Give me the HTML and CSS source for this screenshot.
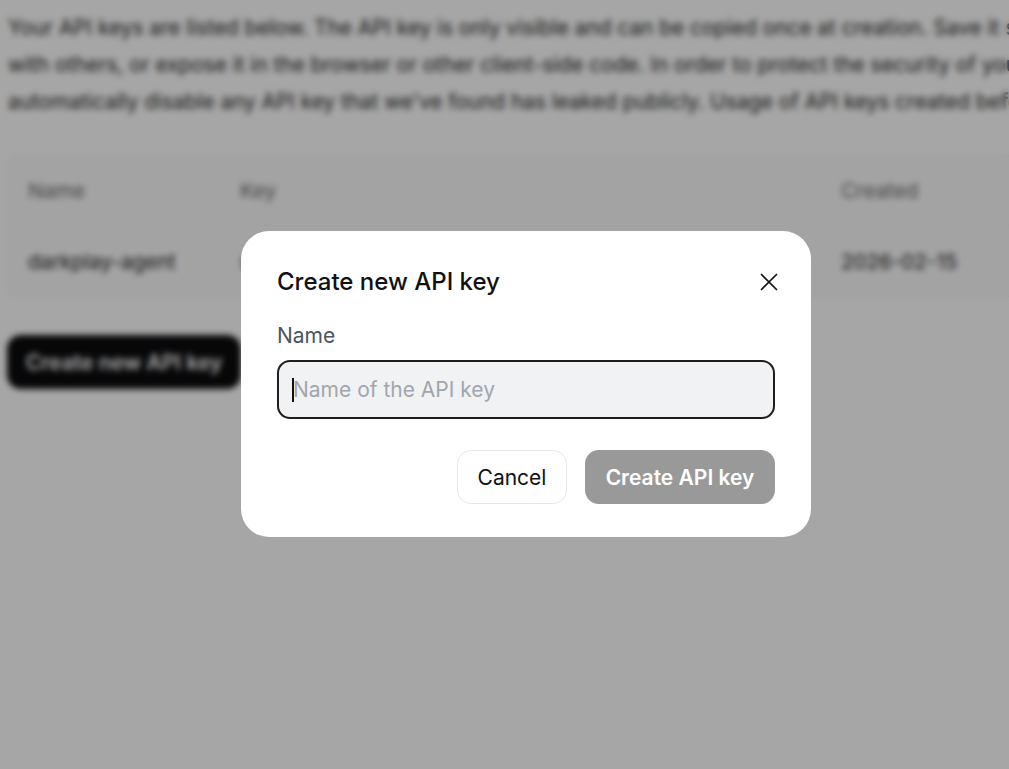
FILE: index.html
```html
<!DOCTYPE html>
<html lang="en">
<head>
<meta charset="utf-8">
<title>API keys</title>
<link rel="stylesheet" href="styles.css">
</head>
<body>
<main class="page">
  <p class="intro">
    <span class="line">Your API keys are listed below. The API key is only visible and can be copied once at creation. Save it somewhere safe. Do not share your API key</span>
    <span class="line">with others, or expose it in the browser or other client-side code. In order to protect the security of your account, we may also</span>
    <span class="line">automatically disable any API key that we've found has leaked publicly. Usage of API keys created before is tracked per key.</span>
  </p>
  <div class="table">
    <div class="row head">
      <div class="c-name">Name</div>
      <div class="c-key">Key</div>
      <div class="c-created">Created</div>
    </div>
    <div class="row">
      <div class="c-name">darkplay-agent</div>
      <div class="c-key">sk-****************************a91f</div>
      <div class="c-created">2026-02-15</div>
    </div>
  </div>
  <button class="primary">Create new API key</button>
</main>

<div class="overlay">
  <div class="modal">
    <div class="modal-head">
      <h2 class="title">Create new API key</h2>
      <button class="close" aria-label="Close">
        <svg width="18" height="18" viewBox="0 0 18 18"><path d="M1.5 1.5 L16.5 16.5 M16.5 1.5 L1.5 16.5" stroke="#111" stroke-width="1.7" stroke-linecap="round"/></svg>
      </button>
    </div>
    <label class="label">Name</label>
    <div class="input"><span class="caret"></span><span class="ph">Name of the API key</span></div>
    <div class="actions">
      <button class="btn cancel">Cancel</button>
      <button class="btn create">Create API key</button>
    </div>
  </div>
</div>
</body>
</html>
```

FILE: styles.css
```css
* { box-sizing: border-box; }
html, body { margin: 0; padding: 0; }
body {
  font-family: Inter, "Noto Sans", "Liberation Sans", sans-serif;
  background: #ffffff;
  color: #111;
  overflow: hidden;
  width: 1009px;
  height: 769px;
}
.page {
  padding: 9px 0 0 8px;
  width: 1009px;
  overflow: hidden;
}
.intro {
  margin: 0;
  font-size: 20.8px;
  line-height: 37px;
  color: #262626;
}
.line {
  display: block;
  white-space: nowrap;
}
.table {
  margin-top: 35px;
  background: #fbfbfc;
  border: 1px solid #eeeeef;
  border-radius: 8px;
  width: 1100px;
}
.row {
  display: flex;
  align-items: center;
  height: 70px;
  font-size: 20.6px;
  color: #222;
  white-space: nowrap;
}
.row.head {
  color: #6b6b6b;
  border-bottom: 1px solid #eeeeef;
}
.c-name { width: 231px; padding-left: 19px; }
.c-key { width: 601px; overflow: hidden; }
.c-created { width: 200px; }
.primary {
  margin-top: 38px;
  margin-left: -1px;
  height: 54px;
  width: 234px;
  border: 0;
  border-radius: 14px;
  background: #0b0b0d;
  color: #fff;
  font-family: inherit;
  font-size: 21px;
  font-weight: 600;
  white-space: nowrap;
}
.overlay {
  position: fixed;
  inset: 0;
  background: rgba(0, 0, 0, 0.35);
  backdrop-filter: blur(3px);
  display: flex;
  align-items: center;
  justify-content: center;
  padding-left: 43px;
  padding-bottom: 1px;
}
.modal {
  width: 570px;
  height: 306px;
  background: #fff;
  border-radius: 28px;
  padding: 37px 36px 33px 36px;
  display: flex;
  flex-direction: column;
}
.modal-head {
  display: flex;
  align-items: center;
  justify-content: space-between;
  height: 28px;
}
.title {
  margin: 0;
  font-size: 24px;
  font-weight: 500;
  color: #111;
  line-height: 28px;
}
.close {
  border: 0;
  background: transparent;
  padding: 0;
  width: 18px;
  height: 18px;
  margin-right: -3px;
  display: flex;
}
.label {
  margin-top: 28px;
  font-size: 21px;
  line-height: 24px;
  color: #4b5563;
}
.input {
  margin-top: 12px;
  height: 59px;
  border: 2px solid #1e1e1e;
  border-radius: 13px;
  background: #f1f2f4;
  display: flex;
  align-items: center;
  padding-left: 13px;
  font-size: 21px;
}
.caret {
  width: 2px;
  height: 24px;
  background: #111;
  margin-right: -1px;
}
.ph { color: #a0a6ae; }
.actions {
  margin-top: 31px;
  display: flex;
  justify-content: flex-end;
  gap: 18px;
}
.btn {
  height: 54px;
  border-radius: 14px;
  font-family: inherit;
  font-size: 21px;
}
.cancel {
  width: 110px;
  background: #fff;
  border: 1px solid #e6e7ea;
  color: #111;
  font-weight: 400;
}
.create {
  width: 190px;
  background: #999999;
  border: 0;
  color: #fff;
  font-weight: 600;
}
```
